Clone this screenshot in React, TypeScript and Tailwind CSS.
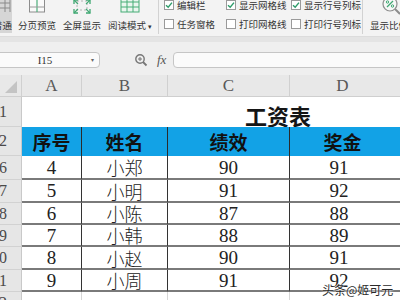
import React from "react";

const serif = "font-['Liberation_Serif','Times_New_Roman',serif]";
const cjk = "font-['Noto_Sans_CJK_SC','Noto_Sans',sans-serif]";

function Check({ checked, label }: { checked: boolean; label: string }) {
  return (
    <div className="flex items-center h-[10px]">
      <div className="w-[10px] h-[10px] border border-[#9a9a9a] bg-white flex items-center justify-center shrink-0">
        {checked && (
          <svg width="8" height="8" viewBox="0 0 8 8">
            <path d="M1 4.2 L3.2 6.3 L7 1.6" fill="none" stroke="#2e9c6a" strokeWidth="1.4" />
          </svg>
        )}
      </div>
      <span className="ml-[3px] text-[9.5px] leading-[11px] text-[#333] whitespace-nowrap">{label}</span>
    </div>
  );
}

const rows = [
  { n: "6", h: "h-[24px]", a: "4", b: "小郑", c: "90", d: "91" },
  { n: "7", h: "h-[23px]", a: "5", b: "小明", c: "91", d: "92" },
  { n: "8", h: "h-[22px]", a: "6", b: "小陈", c: "87", d: "88" },
  { n: "9", h: "h-[22px]", a: "7", b: "小韩", c: "88", d: "89" },
  { n: "10", h: "h-[23px]", a: "8", b: "小赵", c: "90", d: "91" },
  { n: "11", h: "h-[22px]", a: "9", b: "小周", c: "91", d: "92" },
];

function RowHead({ n }: { n: string }) {
  return (
    <div
      className={`w-[22px] shrink-0 overflow-hidden bg-[#e6e6e6] border-r border-[#c9c9c9] border-b border-b-[#d2d2d2] flex items-center justify-end pr-[14px] ${serif} text-[16px] leading-none text-[#4a4a4a] whitespace-nowrap`}
    >
      <span>{n}</span>
    </div>
  );
}

export default function App() {
  return (
    <div className={`w-[400px] h-[300px] overflow-hidden bg-white relative ${cjk}`}>
      {/* Toolbar */}
      <div className="h-[36px] bg-[#f3f3f3] flex items-start overflow-hidden">
        <div className="w-[12px] h-[33px] bg-[#d6d6d6] flex flex-col items-end overflow-hidden shrink-0">
          <svg width="12" height="14" viewBox="0 0 12 14" className="shrink-0">
            <path d="M0 3 H10 M0 8 H10 M5 0 V12 M10 0 V12" stroke="#8a8a8a" strokeWidth="1" fill="none" />
          </svg>
          <span className="mt-[5px] text-[9.5px] leading-[12px] text-[#333] whitespace-nowrap">普通</span>
        </div>
        <div className="ml-[6px] w-[38px] flex flex-col items-center shrink-0">
          <svg width="18" height="14" viewBox="0 0 18 14">
            <rect x="1.5" y="-4" width="15" height="16" fill="#fafafa" stroke="#8c8c8c" />
            <path d="M9 -4 V12" stroke="#4cae7a" strokeWidth="1.2" />
            <path d="M1.5 7 H16.5" stroke="#9a9a9a" strokeWidth="1" />
          </svg>
          <span className="mt-[5px] text-[9.5px] leading-[12px] text-[#333] whitespace-nowrap">分页预览</span>
        </div>
        <div className="ml-[7px] w-[38px] flex flex-col items-center shrink-0">
          <svg width="18" height="14" viewBox="0 0 18 14">
            <rect x="4" y="1" width="10" height="9" fill="none" stroke="#b5b5b5" strokeDasharray="2 2" />
            <path d="M1 4 V0 H5 M13 0 H17 V4 M17 9 V13 H13 M5 13 H1 V9" fill="none" stroke="#3fa872" strokeWidth="1.3" />
            <path d="M1 0 L5 4 M17 0 L13 4 M17 13 L13 9 M1 13 L5 9" stroke="#3fa872" strokeWidth="1.1" />
          </svg>
          <span className="mt-[5px] text-[9.5px] leading-[12px] text-[#333] whitespace-nowrap">全屏显示</span>
        </div>
        <div className="ml-[6px] w-[46px] flex flex-col items-center shrink-0">
          <svg width="20" height="14" viewBox="0 0 20 14">
            <rect x="1" y="-3" width="18" height="15" fill="#eaf6ef" stroke="#47ad77" />
            <path d="M1 2 H19 M1 7 H19 M7 -3 V12 M13 -3 V12" stroke="#47ad77" strokeWidth="1" />
          </svg>
          <span className="mt-[5px] text-[9.5px] leading-[12px] text-[#333] whitespace-nowrap">
            阅读模式 <span className="text-[7px]">▾</span>
          </span>
        </div>
        <div className="ml-[5px] w-px h-[34px] bg-[#d2d2d2] shrink-0" />
        <div className="ml-[5px] w-[62px] flex flex-col gap-[9px] shrink-0">
          <Check checked label="编辑栏" />
          <Check checked={false} label="任务窗格" />
        </div>
        <div className="w-[65px] flex flex-col gap-[9px] shrink-0">
          <Check checked label="显示网格线" />
          <Check checked={false} label="打印网格线" />
        </div>
        <div className="w-[71px] flex flex-col gap-[9px] shrink-0">
          <Check checked label="显示行号列标" />
          <Check checked={false} label="打印行号列标" />
        </div>
        <div className="w-px h-[34px] bg-[#d2d2d2] shrink-0" />
        <div className="ml-[7px] flex flex-col items-center shrink-0">
          <svg width="22" height="15" viewBox="0 0 22 15" className="ml-[6px]">
            <circle cx="9" cy="4" r="7" fill="#f7f7f7" stroke="#8d8d8d" strokeWidth="1.2" />
            <path d="M14 9 L19 14" stroke="#8d8d8d" strokeWidth="2" />
            <path d="M6 7 L12 1" stroke="#3fa872" strokeWidth="1.2" />
            <circle cx="6.5" cy="2" r="1.2" fill="none" stroke="#3fa872" />
            <circle cx="11.5" cy="6" r="1.2" fill="none" stroke="#3fa872" />
          </svg>
          <span className="mt-[4px] text-[9.5px] leading-[12px] text-[#333] whitespace-nowrap">显示比例</span>
        </div>
      </div>
      {/* band */}
      <div className="h-[6px] bg-[#e4e4e4] border-t border-[#dcdcdc]" />
      {/* Formula bar */}
      <div className="h-[33px] bg-[#efefef] flex items-start">
        <div className="-ml-[10px] mt-[10px] w-[110px] h-[16px] bg-[#fbfbfb] border border-[#c6c6c6] rounded-[4px] flex items-center shrink-0">
          <div className="w-[8px]" />
          <div className={`flex-1 text-center text-[11px] leading-[14px] text-[#333] ${serif}`}>I15</div>
          <div className="w-[8px] text-[6px] text-[#666] leading-[8px]">▾</div>
        </div>
        <svg width="14" height="14" viewBox="0 0 14 14" className="ml-[34px] mt-[11px] shrink-0">
          <circle cx="6" cy="6" r="4.2" fill="none" stroke="#777" strokeWidth="1.4" />
          <path d="M9 9 L12.5 12.5" stroke="#777" strokeWidth="1.8" />
          <path d="M4 6 H8 M6 4 V8" stroke="#777" strokeWidth="1" />
        </svg>
        <div className={`ml-[9px] mt-[10px] text-[13px] leading-[16px] italic text-[#555] ${serif}`}>fx</div>
        <div className="ml-[7px] mt-[10px] flex-1 h-[16px] bg-[#fbfbfb] border border-[#c6c6c6] rounded-[4px] -mr-[10px]" />
      </div>
      {/* Column header */}
      <div className={`h-[22px] bg-[#e8e8e8] border-b border-[#cfcfcf] flex ${serif} text-[17px] leading-none text-[#585858]`}>
        <div className="w-[22px] shrink-0 border-r border-[#d0d0d0] flex items-end justify-end pr-[4px] pb-[3px]">
          <svg width="12" height="12" viewBox="0 0 12 12">
            <path d="M12 0 L12 12 L0 12 Z" fill="#c4c4c4" />
          </svg>
        </div>
        <div className="w-[60px] shrink-0 border-r border-[#d0d0d0] flex items-center justify-center">A</div>
        <div className="w-[86px] shrink-0 border-r border-[#d0d0d0] flex items-center justify-center">B</div>
        <div className="w-[122px] shrink-0 border-r border-[#d0d0d0] flex items-center justify-center">C</div>
        <div className="flex-1 flex items-center justify-center pr-[5px]">D</div>
      </div>
      {/* Row 1 title */}
      <div className="h-[30px] flex">
        <RowHead n="1" />
        <div className="flex-1 flex items-center pl-[223px] pt-[5px]">
          <span className="text-[22px] font-bold text-[#151515] leading-none whitespace-nowrap">工资表</span>
        </div>
      </div>
      {/* Row 2 header */}
      <div className="h-[29px] flex">
        <RowHead n="2" />
        <div className="w-[60px] shrink-0 bg-[#12a2e6] border-r border-[#2b2b2b] flex items-center justify-center text-[19px] leading-none font-bold text-[#111]">序号</div>
        <div className="w-[86px] shrink-0 bg-[#12a2e6] border-r border-[#2b2b2b] flex items-center justify-center text-[19px] leading-none font-bold text-[#111]">姓名</div>
        <div className="w-[122px] shrink-0 bg-[#12a2e6] border-r border-[#2b2b2b] flex items-center justify-center text-[19px] leading-none font-bold text-[#111]">绩效</div>
        <div className="flex-1 bg-[#12a2e6] flex items-center justify-center pr-[5px] text-[19px] leading-none font-bold text-[#111]">奖金</div>
      </div>
      {/* Data rows */}
      {rows.map((r) => (
        <div key={r.n} className={`${r.h} flex`}>
          <RowHead n={r.n} />
          <div className={`w-[60px] shrink-0 border-r border-r-[#333] border-b-2 border-b-[#7a7a7a] flex items-center justify-center ${serif} text-[19px] leading-none text-[#222]`}>{r.a}</div>
          <div className="w-[86px] shrink-0 border-r border-r-[#333] border-b-2 border-b-[#7a7a7a] flex items-center justify-center text-[18px] leading-none font-light text-[#222]">{r.b}</div>
          <div className={`w-[122px] shrink-0 border-r border-r-[#333] border-b-2 border-b-[#7a7a7a] flex items-center justify-center ${serif} text-[19px] leading-none text-[#222]`}>{r.c}</div>
          <div className={`flex-1 border-b-2 border-b-[#7a7a7a] flex items-center justify-center pr-[12px] ${serif} text-[19px] leading-none text-[#222]`}>{r.d}</div>
        </div>
      ))}
      {/* Row 12 partial */}
      <div className="h-[22px] flex">
        <RowHead n="12" />
        <div className="w-[60px] shrink-0 border-r border-[#d6d6d6]" />
        <div className="w-[86px] shrink-0 border-r border-[#d6d6d6]" />
        <div className="w-[122px] shrink-0 border-r border-[#d6d6d6]" />
        <div className="flex-1" />
      </div>
      {/* Watermark */}
      <div className="absolute left-[322px] top-[283px] text-[12px] leading-[14px] text-[#2a2a2a] whitespace-nowrap [text-shadow:0_0_2px_#fff,0_0_2px_#fff]">
        头条@姬可元
      </div>
    </div>
  );
}
